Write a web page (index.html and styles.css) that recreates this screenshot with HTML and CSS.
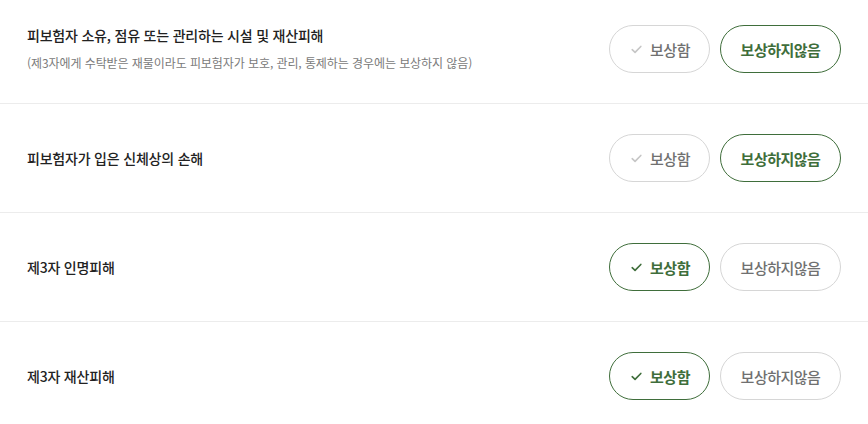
FILE: index.html
```html
<!DOCTYPE html>
<html lang="ko">
<head>
<meta charset="utf-8">
<link rel="stylesheet" href="styles.css">
</head>
<body>
<ul class="list">
  <li class="row row-first">
    <div class="label">
      <p class="title">피보험자 소유, 점유 또는 관리하는 시설 및 재산피해</p>
      <p class="note">(제3자에게 수탁받은 재물이라도 피보험자가 보호, 관리, 통제하는 경우에는 보상하지 않음)</p>
    </div>
    <div class="choices">
      <button class="chip chip-yes"><svg class="check" viewBox="0 0 12 10" width="11" height="9"><path d="M1.2 5.2 L4.4 8.2 L10.8 1.6" fill="none" stroke="currentColor" stroke-width="1.8" stroke-linecap="round" stroke-linejoin="round"/></svg>보상함</button>
      <button class="chip chip-no is-on">보상하지않음</button>
    </div>
  </li>
  <li class="row">
    <div class="label">
      <p class="title">피보험자가 입은 신체상의 손해</p>
    </div>
    <div class="choices">
      <button class="chip chip-yes"><svg class="check" viewBox="0 0 12 10" width="11" height="9"><path d="M1.2 5.2 L4.4 8.2 L10.8 1.6" fill="none" stroke="currentColor" stroke-width="1.8" stroke-linecap="round" stroke-linejoin="round"/></svg>보상함</button>
      <button class="chip chip-no is-on">보상하지않음</button>
    </div>
  </li>
  <li class="row">
    <div class="label">
      <p class="title">제3자 인명피해</p>
    </div>
    <div class="choices">
      <button class="chip chip-yes is-on"><svg class="check" viewBox="0 0 12 10" width="11" height="9"><path d="M1.2 5.2 L4.4 8.2 L10.8 1.6" fill="none" stroke="currentColor" stroke-width="1.8" stroke-linecap="round" stroke-linejoin="round"/></svg>보상함</button>
      <button class="chip chip-no">보상하지않음</button>
    </div>
  </li>
  <li class="row row-last">
    <div class="label">
      <p class="title">제3자 재산피해</p>
    </div>
    <div class="choices">
      <button class="chip chip-yes is-on"><svg class="check" viewBox="0 0 12 10" width="11" height="9"><path d="M1.2 5.2 L4.4 8.2 L10.8 1.6" fill="none" stroke="currentColor" stroke-width="1.8" stroke-linecap="round" stroke-linejoin="round"/></svg>보상함</button>
      <button class="chip chip-no">보상하지않음</button>
    </div>
  </li>
</ul>
</body>
</html>
```
FILE: styles.css
```css
* { box-sizing: border-box; }
html, body {
  margin: 0;
  padding: 0;
  background: #fff;
  font-family: "Noto Sans CJK KR", "Noto Sans", sans-serif;
  color: #222;
}
.list {
  list-style: none;
  margin: 0;
  padding: 0;
}
.row {
  display: flex;
  align-items: center;
  justify-content: space-between;
  padding: 30px 27px 30px 27px;
  border-bottom: 1px solid #ececec;
}
.row-first { padding-top: 25px; }
.row-last { border-bottom: none; }
.label {
  display: flex;
  flex-direction: column;
}
.title {
  margin: 0;
  font-size: 14px;
  line-height: 20px;
  font-weight: 500;
  letter-spacing: -0.2px;
  color: #222;
}
.note {
  margin: 8px 0 0;
  font-size: 12px;
  line-height: 20px;
  font-weight: 400;
  letter-spacing: -0.08px;
  color: #7a7a7a;
}
.choices {
  display: flex;
  gap: 10px;
}
.chip {
  display: flex;
  align-items: center;
  justify-content: center;
  gap: 8px;
  height: 48px;
  border-radius: 24px;
  background: #fff;
  border: 1px solid #d6d6d6;
  color: #707070;
  font-family: inherit;
  font-size: 15px;
  font-weight: 500;
  letter-spacing: -0.5px;
  padding: 0;
  cursor: pointer;
}
.chip-yes { width: 101px; padding-left: 2px; }
.chip-no { width: 121px; }
.check { color: #c6c6c6; }
.chip.is-on {
  border-color: #3f6e3b;
  color: #3f6e3b;
  font-weight: 700;
}
.chip.is-on .check { color: #3f6e3b; }
```
